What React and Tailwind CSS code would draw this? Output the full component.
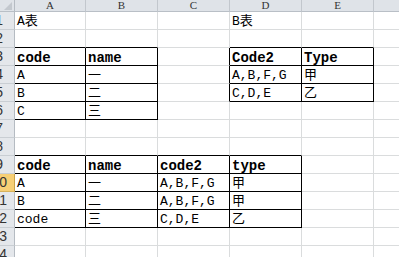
import React from 'react';

const cols = ['A', 'B', 'C', 'D', 'E', 'F'];
const rowCount = 14;

const cells = {
  '1-0': { t: 'A表' },
  '1-3': { t: 'B表' },
  '3-0': { t: 'code', b: true },
  '3-1': { t: 'name', b: true },
  '3-3': { t: 'Code2', b: true },
  '3-4': { t: 'Type', b: true },
  '4-0': { t: 'A' },
  '4-1': { t: '一' },
  '4-3': { t: 'A,B,F,G' },
  '4-4': { t: '甲' },
  '5-0': { t: 'B' },
  '5-1': { t: '二' },
  '5-3': { t: 'C,D,E' },
  '5-4': { t: '乙' },
  '6-0': { t: 'C' },
  '6-1': { t: '三' },
  '9-0': { t: 'code', b: true },
  '9-1': { t: 'name', b: true },
  '9-2': { t: 'code2', b: true },
  '9-3': { t: 'type', b: true },
  '10-0': { t: 'A' },
  '10-1': { t: '一' },
  '10-2': { t: 'A,B,F,G' },
  '10-3': { t: '甲' },
  '11-0': { t: 'B' },
  '11-1': { t: '二' },
  '11-2': { t: 'A,B,F,G' },
  '11-3': { t: '甲' },
  '12-0': { t: 'code' },
  '12-1': { t: '三' },
  '12-2': { t: 'C,D,E' },
  '12-3': { t: '乙' },
};

const tables = [
  { r1: 3, r2: 6, c1: 0, c2: 1 },
  { r1: 3, r2: 5, c1: 3, c2: 4 },
  { r1: 9, r2: 12, c1: 0, c2: 3 },
];

const inTable = (r, c) =>
  tables.some((t) => r >= t.r1 && r <= t.r2 && c >= t.c1 && c <= t.c2);

const font = { fontFamily: '"Liberation Mono", "Noto Sans CJK SC", monospace' };

function Cell({ r, c }) {
  const cell = cells[`${r}-${c}`];
  const right = inTable(r, c) || inTable(r, c + 1) ? 'border-r-black' : 'border-r-[#dadcdd]';
  const bottom = inTable(r, c) || inTable(r + 1, c) ? 'border-b-black' : 'border-b-[#dadcdd]';
  return (
    <div className={`h-[18px] border-r border-b bg-white flex items-end pl-[2px] overflow-visible ${right} ${bottom}`}>
      {cell && (
        <span
          className={`whitespace-nowrap text-black ${cell.b ? 'font-bold text-[14px] leading-[14px]' : 'text-[13px] leading-[14px]'}`}
          style={font}
        >
          {cell.t}
        </span>
      )}
    </div>
  );
}

// the row header is scrolled so only the right part of its numbers shows
function RowHeader({ r }) {
  const active = r === 10;
  return (
    <div
      className={`h-[18px] w-[15px] overflow-hidden border-r border-b flex items-end justify-end ${
        active ? 'bg-[#f6cf76] border-r-[#c9a24a] border-b-[#d7b25a]' : 'bg-[#e4e7eb] border-r-[#b5bbc2] border-b-[#c9ced3]'
      }`}
    >
      <div
        className="w-[28px] shrink-0 mr-[-1px] pr-[8px] text-right text-[14px] leading-[17px] text-[#333]"
        style={{ fontFamily: '"Liberation Sans", sans-serif' }}
      >
        {r >= 10 ? r : <span className="pr-[4px]">{r}</span>}
      </div>
    </div>
  );
}

export default function App() {
  const rows = Array.from({ length: rowCount }, (_, i) => i + 1);
  return (
    <div className="w-[399px] h-[257px] overflow-hidden bg-white">
      <div className="grid grid-cols-[15px_71px_72px_72px_72px_72px_72px]">
        <div className="h-[12px] bg-[#dfe3e8] border-r border-b border-r-[#b5bbc2] border-b-[#b9bfc6] relative">
          <svg width="15" height="12" className="absolute left-0 top-0">
            <polygon points="12,2 12,10 4,10" fill="#c3c8ce" />
          </svg>
        </div>
        {cols.map((c) => (
          <div
            key={c}
            className="h-[12px] bg-[#dfe3e8] border-r border-b border-r-[#c2c7cd] border-b-[#b9bfc6] flex items-center justify-center"
          >
            <span
              className="text-[11px] leading-[11px] text-[#333]"
              style={{ fontFamily: '"Liberation Serif", serif' }}
            >
              {c}
            </span>
          </div>
        ))}
        {rows.map((r) => (
          <React.Fragment key={r}>
            <RowHeader r={r} />
            {cols.map((_, c) => (
              <Cell key={c} r={r} c={c} />
            ))}
          </React.Fragment>
        ))}
      </div>
    </div>
  );
}
